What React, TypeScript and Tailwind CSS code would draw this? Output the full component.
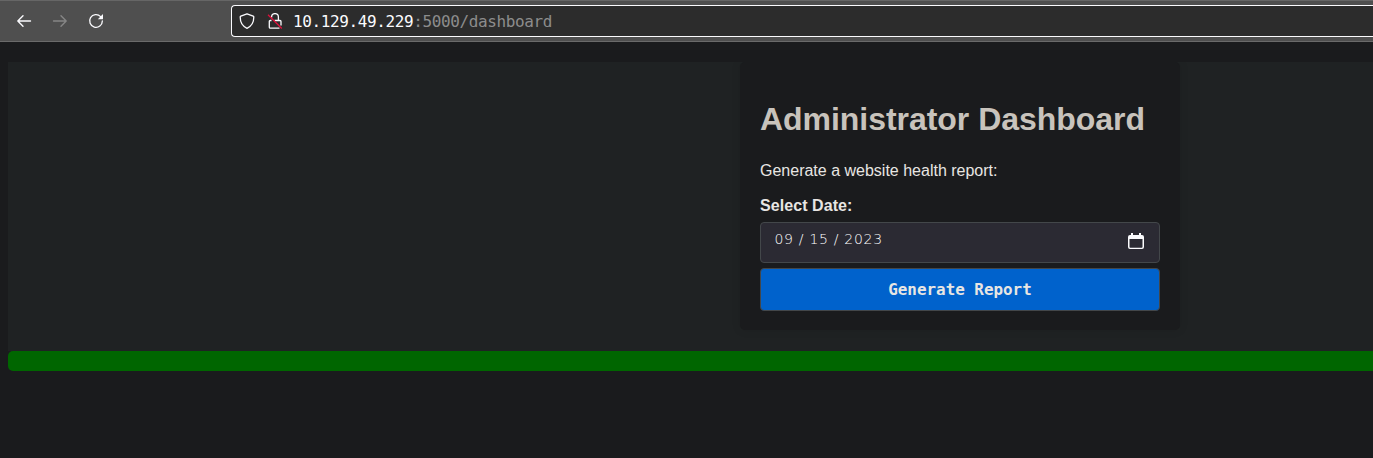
import type { ReactNode } from 'react';

function Toolbar({ children }: { children: ReactNode }) {
  return (
    <header className="flex h-[42px] w-full items-center border-t border-b border-t-[#666666] border-b-[#6a6a6a] bg-[#4f4f4f]">
      {children}
    </header>
  );
}

const BackIcon = () => (
  <svg className="ml-4 size-4 shrink-0" viewBox="0 0 16 16" fill="none" stroke="#fbfbfe" strokeWidth="1.4" strokeLinecap="round" strokeLinejoin="round">
    <path d="M14.5 8H1.8M7 2.8 1.8 8 7 13.2" />
  </svg>
);

const ForwardIcon = () => (
  <svg className="ml-5 size-4 shrink-0" viewBox="0 0 16 16" fill="none" stroke="#868686" strokeWidth="1.4" strokeLinecap="round" strokeLinejoin="round">
    <path d="M1.5 8h12.7M9 2.8 14.2 8 9 13.2" />
  </svg>
);

const ReloadIcon = () => (
  <svg className="ml-5 size-4 shrink-0" viewBox="0 0 16 16" fill="none">
    <path d="M12.6 3.6A6.35 6.35 0 1 0 14.35 8" stroke="#fbfbfe" strokeWidth="1.3" strokeLinecap="round" />
    <path d="M15 1v4.7a.5.5 0 0 1-.5.5H9.8Z" fill="#fbfbfe" />
  </svg>
);

const ShieldIcon = () => (
  <svg className="ml-[7px] size-4 shrink-0" viewBox="0 0 16 16" fill="none" stroke="#fbfbfe" strokeWidth="1.3" strokeLinejoin="round">
    <path d="M8 .8 14.2 3.2c.5.2.6.5.6.9 0 5.4-2.2 9.2-6.8 11.2C3.4 13.3 1.2 9.5 1.2 4.1c0-.4.1-.7.6-.9Z" />
  </svg>
);

const InsecureIcon = () => (
  <svg className="ml-3 size-4 shrink-0" viewBox="0 0 16 16" fill="none">
    <path d="M4.6 4.4V4a3.4 3.4 0 0 1 6.8 0v3.2M7.5 7.5H13a1 1 0 0 1 1 1V12.5M12.5 15.2H3.3a1 1 0 0 1-1-1V8.5a1 1 0 0 1 1-1h1.2" stroke="#fbfbfe" strokeWidth="1.3" />
    <path d="M1 1.700 14.800 15.500" stroke="#e1103c" strokeWidth="1.3" />
  </svg>
);

const CalendarIcon = () => (
  <svg className="size-4" viewBox="0 0 16 16">
    <path d="M3 0h2v2h6V0h2v2h1a2 2 0 0 1 2 2v10a2 2 0 0 1-2 2H2a2 2 0 0 1-2-2V4a2 2 0 0 1 2-2h1ZM1.5 6v8a.7.7 0 0 0 .7.7h11.6a.7.7 0 0 0 .7-.7V6Z" fill="#fbfbfe" fillRule="evenodd" />
  </svg>
);

export default function App() {
  return (
    <div className="h-[458px] w-full overflow-hidden bg-[#1a1b1d] font-['Liberation_Sans',sans-serif] text-[#e8e6e3]">
      <Toolbar>
        <BackIcon />
        <ForwardIcon />
        <ReloadIcon />
        <div className="ml-[127px] flex h-8 flex-1 items-center rounded-l border border-r-0 border-[#fbfbfe] bg-[#2c2c2c]">
          <ShieldIcon />
          <InsecureIcon />
          <span className="ml-[10px] pt-[2px] font-['DejaVu_Sans_Mono',monospace] text-[16px] leading-6 tracking-[-0.38px] whitespace-pre text-[#fbfbfe]">
            10.129.49.229<span className="text-[#8c8c8c]">:5000/dashboard</span>
          </span>
        </div>
      </Toolbar>
      <main className="mt-5 ml-2">
        <section className="h-[289px] overflow-hidden bg-[#1f2223]">
          <div className="ml-[732px] flex h-[268px] w-[440px] flex-col rounded-[5px] bg-[#1a1b1d] px-5 shadow-[0_0_10px_rgba(0,0,0,0.1)]">
            <h1 className="mt-[39px] h-9 text-[32px] leading-9 font-bold tracking-[-0.04px] whitespace-nowrap text-[#c8c3bc]">Administrator Dashboard</h1>
            <p className="mt-[25px] h-[18px] text-base leading-[18px]">Generate a website health report:</p>
            <label className="mt-[17px] h-[18px] text-base leading-[18px] font-bold tracking-[0.07px]">Select Date:</label>
            <div className="mt-[7px] flex h-[41px] w-[400px] items-start justify-between rounded-[4px] border border-[#43474a] bg-[#2b2a33] pr-[15px] pl-[13.5px]">
              <span className="mt-[6px] font-['DejaVu_Sans',sans-serif] text-[14px] leading-[20px] font-extralight tracking-[0.7px] whitespace-pre text-white">09 / 15 / 2023</span>
              <span className="mt-[10px]"><CalendarIcon /></span>
            </div>
            <button className="mt-[5px] h-[43px] w-[400px] rounded-[4px] border border-[#43474a] bg-[#0062cc] font-['DejaVu_Sans_Mono',monospace] text-[15.9px] font-bold text-[#e8e6e3]">
              Generate Report
            </button>
          </div>
        </section>
        <div className="h-5 rounded-l-[5px] bg-[#006600]" />
      </main>
    </div>
  );
}
